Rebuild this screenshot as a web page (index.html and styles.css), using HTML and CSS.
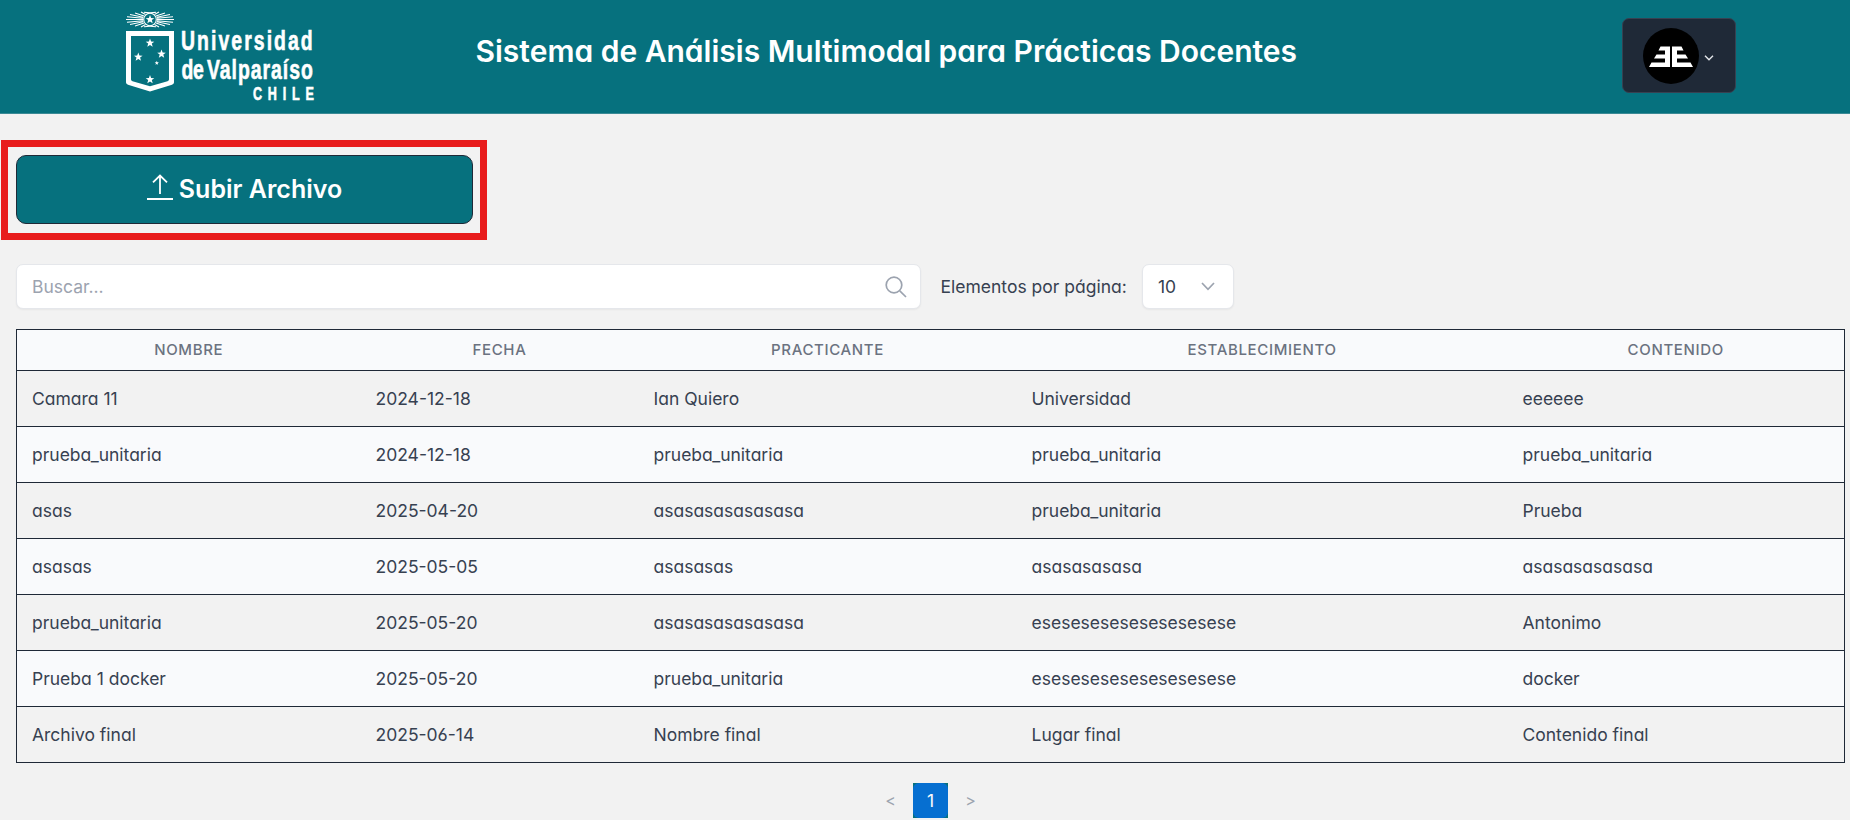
FILE: index.html
```html
<!DOCTYPE html>
<html lang="es">
<head>
<meta charset="utf-8">
<title>Sistema de Análisis Multimodal para Prácticas Docentes</title>
<link rel="stylesheet" href="styles.css">
</head>
<body>
<header class="topbar">
  <svg class="logo" width="192" height="92" viewBox="0 0 192 92" role="img">
    <defs>
      <path id="star" d="M0-4.4 1.1-1.4 4.3-1.3 1.8.6 2.7 3.7 0 1.9-2.7 3.7-1.8.6-4.3-1.3-1.1-1.4Z"/>
    </defs>
    <g fill="#fff">
      <g stroke="#fff" stroke-width="1.1" fill="none">
        <path d="M18 9.500H1M18 8.300 2 6.800M18.200 7.200 5 4.500M19 6 10 2.900M20.500 4.500 16 2M18 10.700 2 12.200M18.200 11.800 5 14.500M19 13 10 16.100M20.500 14.500 16 17M32 9.500H49M32 8.300 48 6.800M31.800 7.200 45 4.500M31 6 40 2.900M29.500 4.500 34 2M32 10.700 48 12.200M31.800 11.800 45 14.500M31 13 40 16.100M29.500 14.500 34 17"/>
        <circle cx="25" cy="9.500" r="6.300"/>
        <path d="M19 2.200Q25 3.200 31 2.200M19 16.800Q25 15.800 31 16.800"/>
      </g>
      <use href="#star" x="25" y="9.500"/>
      <path fill-rule="evenodd" d="M1 21H49V72.500Q49 74 47 74.800L25 81.500 3 74.800Q1 74 1 72.500ZM6 26V69.500Q6 70.800 7.500 71.300L25 76.300 42.500 71.300Q44 70.800 44 69.500V26Z"/>
      <use href="#star" x="25" y="33"/>
      <use href="#star" x="13.300" y="47"/>
      <use href="#star" x="36.500" y="44"/>
      <use href="#star" transform="translate(31.800 53) scale(.5)"/>
      <use href="#star" x="25" y="69.500"/>
      <g class="logo-text">
        <text transform="translate(56 40) scale(.72 1)" font-size="27" textLength="183">Universidad</text>
        <text transform="translate(56.500 68.500) scale(.72 1)" font-size="27" textLength="31">de</text>
        <text transform="translate(82 68.500) scale(.72 1)" font-size="27" textLength="147">Valparaíso</text>
        <text transform="translate(128 89.500) scale(.7 1)" font-size="18" textLength="87">CHILE</text>
      </g>
    </g>
  </svg>
  <h1 class="title">Sistema de Análisis Multimodal para Prácticas Docentes</h1>
  <button class="user">
    <svg width="56" height="56" viewBox="0 0 56 56">
      <circle cx="28" cy="28" r="28"/>
      <path fill="#fff" d="M17.500 18.500H27V39H6L8.500 34.500H22V30.500H11L13.500 26.500H22V22.500H15.500ZM29 18.500H38.500L40.500 22.500H34V26.500H42.500L45 30.500H34V34.500H47.500L50 39H29Z"/>
    </svg>
    <svg class="caret" width="10" height="6" viewBox="0 0 10 6"><path d="M1 .8 5 4.800 9 .8"/></svg>
  </button>
</header>
<main class="content">
  <div class="highlight">
    <button class="upload">
      <svg width="26" height="27" viewBox="0 0 26 27"><path d="M13 20V1.500M6 8.300 13 1.500 20 8.300M0 25H26"/></svg>
      <span>Subir Archivo</span>
    </button>
  </div>
  <div class="filters">
    <label class="search">
      <input type="text" placeholder="Buscar...">
      <svg width="22" height="22" viewBox="0 0 22 22"><circle cx="9" cy="9" r="7.800"/><path d="M14.800 14.800 21 21"/></svg>
    </label>
    <span class="per-page">Elementos por página:</span>
    <div class="select"><span>10</span><svg width="14" height="9" viewBox="0 0 14 9"><path d="M1 1 7 7.300 13 1"/></svg></div>
  </div>
  <table class="files">
    <colgroup><col class="c-name"><col class="c-date"><col class="c-person"><col class="c-place"><col></colgroup>
    <thead><tr><th>Nombre</th><th>Fecha</th><th>Practicante</th><th>Establecimiento</th><th>Contenido</th></tr></thead>
    <tbody>
      <tr><td>Camara 11</td><td>2024-12-18</td><td>Ian Quiero</td><td>Universidad</td><td>eeeeee</td></tr>
      <tr><td>prueba_unitaria</td><td>2024-12-18</td><td>prueba_unitaria</td><td>prueba_unitaria</td><td>prueba_unitaria</td></tr>
      <tr><td>asas</td><td>2025-04-20</td><td>asasasasasasasa</td><td>prueba_unitaria</td><td>Prueba</td></tr>
      <tr><td>asasas</td><td>2025-05-05</td><td>asasasas</td><td>asasasasasa</td><td>asasasasasasa</td></tr>
      <tr><td>prueba_unitaria</td><td>2025-05-20</td><td>asasasasasasasa</td><td>esesesesesesesesesese</td><td>Antonimo</td></tr>
      <tr><td>Prueba 1 docker</td><td>2025-05-20</td><td>prueba_unitaria</td><td>esesesesesesesesesese</td><td>docker</td></tr>
      <tr><td>Archivo final</td><td>2025-06-14</td><td>Nombre final</td><td>Lugar final</td><td>Contenido final</td></tr>
    </tbody>
  </table>
  <nav class="pager"><span class="arrow">&lt;</span><span class="current"><b>1</b></span><span class="arrow">&gt;</span></nav>
</main>
</body>
</html>
```
FILE: styles.css
```css
* { box-sizing: border-box; }
body {
  margin: 0;
  height: 820px;
  overflow: hidden;
  background: #f2f2f2;
  color: #374151;
  font: 17.5px/25px Inter, sans-serif;
  font-feature-settings: "cv03", "cv04", "cv11";
}
button, input { font-family: inherit; margin: 0; }
.topbar {
  height: 114px;
  background: #06717e;
  border-bottom: 1px solid #3b8a95;
  display: flex;
  align-items: flex-start;
  padding: 10px 114px 0 125px;
}
.logo { flex: none; overflow: visible; }
.logo-text {
  font-family: "Liberation Sans", Arial, sans-serif;
  font-weight: 700;
  stroke: #fff;
  stroke-width: .6;
}
.title {
  margin: 23px 0 0 158.5px;
  color: #fff;
  font-size: 30px;
  line-height: 36px;
  font-weight: 600;
  white-space: nowrap;
}
.user {
  margin: 8px 0 0 auto;
  width: 114px;
  height: 75px;
  padding: 0 0 0 20px;
  display: flex;
  align-items: center;
  gap: 5px;
  background: #1f2937;
  border: 1px solid #374151;
  border-radius: 7px;
}
.caret { margin-top: 4px; fill: none; stroke: #e5e7eb; stroke-width: 1.4; }
.content { padding: 26px 5px 0 1px; }
.highlight {
  width: 486px;
  height: 100px;
  border: 7.5px solid #e81c1c;
  padding: 8px 6px 8px 8px;
}
.upload {
  width: 457px;
  height: 69px;
  display: flex;
  align-items: center;
  justify-content: center;
  gap: 6px;
  background: #06717e;
  border: 1px solid #1f2937;
  border-radius: 10px;
  color: #fff;
  font-size: 25px;
  font-weight: 600;
}
.upload svg { margin-top: -4px; fill: none; stroke: #fff; stroke-width: 1.8; }
.upload span { margin-top: -2px; }
.filters { display: flex; align-items: center; margin: 24px 0 20px 15px; height: 45px; }
.search, .select {
  display: flex;
  align-items: center;
  justify-content: space-between;
  height: 45px;
  background: #fff;
  border: 1px solid #e5e7eb;
  border-radius: 7px;
  box-shadow: 0 1px 2px rgba(0, 0, 0, .05);
}
.search { width: 905px; padding: 0 13.5px 0 15px; }
.search input { border: 0; outline: 0; padding: 0; width: 600px; font-size: 17.5px; background: none; }
.search input::placeholder { color: #9ca3af; }
.search svg, .select svg { fill: none; stroke: #9ca3af; stroke-width: 1.7; }
.per-page { margin: 0 16px 0 19.5px; width: 185.5px; white-space: nowrap; }
.select { width: 92px; padding: 0 18px 0 15px; }
.files {
  width: 1829px;
  margin-left: 15px;
  table-layout: fixed;
  border-collapse: collapse;
  border: 1px solid #1f2937;
}
.c-name { width: 344px; }
.c-date { width: 278px; }
.c-person { width: 378px; }
.c-place { width: 491px; }
.files th {
  height: 41px;
  padding: 0;
  font-size: 15px;
  line-height: 20px;
  font-weight: 500;
  letter-spacing: .65px;
  color: #6b7280;
  text-transform: uppercase;
}
.files tr { background: #f9fafc; border-bottom: 1px solid #1f2937; }
.files tbody tr:nth-child(odd) { background: #f2f2f2; }
.files td { height: 56px; padding: 0 15px; white-space: nowrap; }
.pager { display: flex; align-items: center; justify-content: center; gap: 16px; margin: 20px 0 0 15px; }
.arrow { width: 13px; text-align: center; font-size: 16px; color: #9ca3af; }
.current { width: 35px; height: 35px; background: #06717e; }
.current b {
  display: block;
  height: 35px;
  border-radius: 6px;
  background: #066fd1;
  color: #f9fafb;
  font-weight: 400;
  line-height: 35px;
  text-align: center;
}
```
